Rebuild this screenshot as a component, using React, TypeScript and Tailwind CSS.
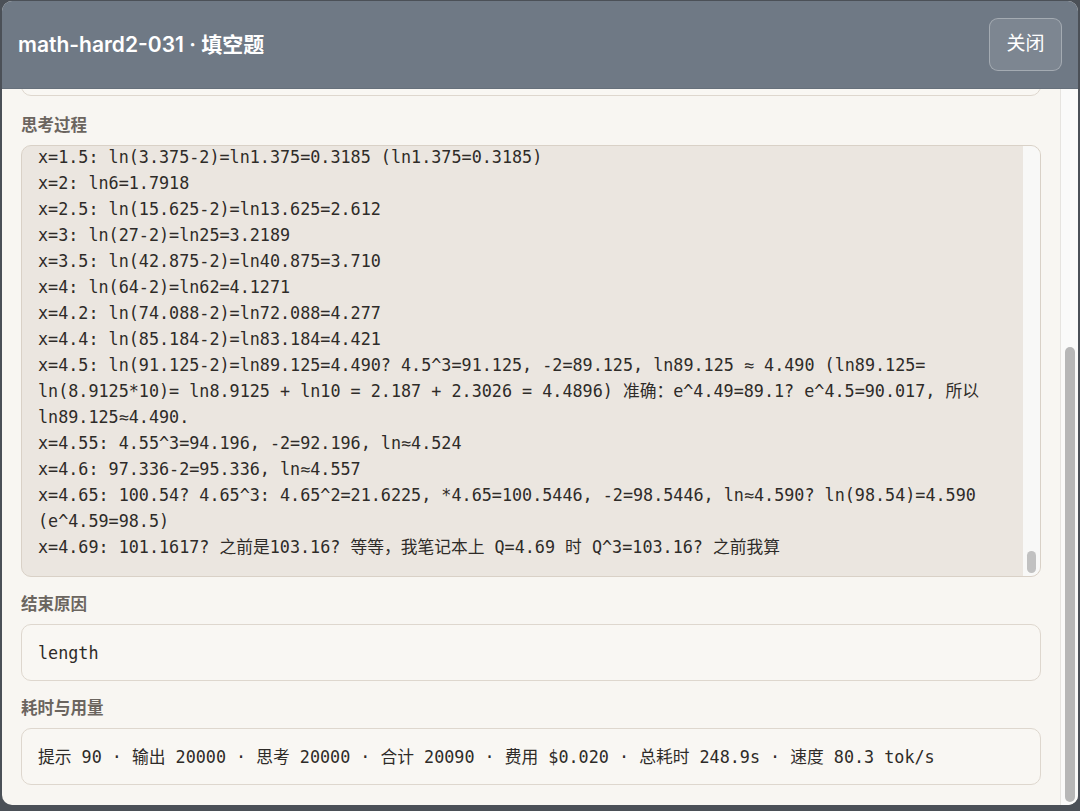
const thinkingLines = [
  "x=1.5: ln(3.375-2)=ln1.375=0.3185 (ln1.375=0.3185)",
  "x=2: ln6=1.7918",
  "x=2.5: ln(15.625-2)=ln13.625=2.612",
  "x=3: ln(27-2)=ln25=3.2189",
  "x=3.5: ln(42.875-2)=ln40.875=3.710",
  "x=4: ln(64-2)=ln62=4.1271",
  "x=4.2: ln(74.088-2)=ln72.088=4.277",
  "x=4.4: ln(85.184-2)=ln83.184=4.421",
  "x=4.5: ln(91.125-2)=ln89.125=4.490? 4.5^3=91.125, -2=89.125, ln89.125 ≈ 4.490 (ln89.125=",
  "ln(8.9125*10)= ln8.9125 + ln10 = 2.187 + 2.3026 = 4.4896) 准确：e^4.49=89.1? e^4.5=90.017, 所以",
  "ln89.125≈4.490.",
  "x=4.55: 4.55^3=94.196, -2=92.196, ln≈4.524",
  "x=4.6: 97.336-2=95.336, ln≈4.557",
  "x=4.65: 100.54? 4.65^3: 4.65^2=21.6225, *4.65=100.5446, -2=98.5446, ln≈4.590? ln(98.54)=4.590",
  "(e^4.59=98.5)",
  "x=4.69: 101.1617? 之前是103.16? 等等，我笔记本上 Q=4.69 时 Q^3=103.16? 之前我算",
];

const mono = {
  fontFamily: '"DejaVu Sans Mono", "Noto Sans CJK SC", monospace',
};

function Label({ children, first }: { children: string; first?: boolean }) {
  return (
    <div
      className={`${first ? "mt-[19px]" : "mt-[17px]"} mb-[10px] h-5 text-[16.5px] font-bold leading-5 text-[#6b655f]`}
    >
      {children}
    </div>
  );
}

function PlainBox({ children }: { children: string }) {
  return (
    <div
      className="h-[57px] rounded-[10px] border border-[#ded7ce] bg-[#f9f7f3] px-4 py-4 text-[16.75px] leading-6 text-[#2e2b28] whitespace-pre"
      style={mono}
    >
      {children}
    </div>
  );
}

export default function App() {
  return (
    <div
      className="h-[811px] w-[1080px] overflow-hidden bg-[#4b5057] pl-[2px] pt-[1px]"
      style={{ fontFamily: 'Inter, "Noto Sans CJK SC", sans-serif' }}
    >
      <div className="flex h-[804px] w-[1076px] flex-col overflow-hidden rounded-[10px] bg-[#f8f6f2]">
        {/* header */}
        <div className="flex shrink-0 items-center justify-between border-b border-[#66707b] bg-[#6f7985] py-[17px] pl-4 pr-[16px]">
          <div className="text-[21px] font-semibold text-white">
            math-hard2-031 · 填空题
          </div>
          <button className="h-[53px] w-[73px] rounded-[9px] border border-white/30 bg-white/10 text-[19px] text-white">
            关闭
          </button>
        </div>

        {/* body */}
        <div className="flex min-h-0 flex-1">
          <div className="flex min-w-0 flex-1 flex-col justify-end overflow-hidden pb-5 pl-[19px] pr-[19px]">
            <div className="h-[60px] shrink-0 rounded-[10px] border border-[#ded7ce] bg-[#f9f7f3]" />

            <Label first>思考过程</Label>
            <div className="flex h-[432px] shrink-0 overflow-hidden rounded-[10px] border border-[#d9d1c7] bg-[#ebe6e0]">
              <div
                className="flex min-w-0 flex-1 flex-col justify-end overflow-hidden pb-4 pl-4 text-[16.75px] leading-[26px] text-[#2e2b28]"
                style={mono}
              >
                {thinkingLines.map((line, i) => (
                  <div key={i} className="shrink-0 whitespace-pre">
                    {line}
                  </div>
                ))}
              </div>
              <div className="flex w-[17px] shrink-0 flex-col justify-end bg-[#f8f8f7] pb-[3px] pl-[4px]">
                <div className="h-[22px] w-[9px] rounded-full bg-[#c1c1c1]" />
              </div>
            </div>

            <Label>结束原因</Label>
            <PlainBox>length</PlainBox>

            <Label>耗时与用量</Label>
            <PlainBox>
              提示 90 · 输出 20000 · 思考 20000 · 合计 20090 · 费用 $0.020 · 总耗时 248.9s · 速度 80.3 tok/s
            </PlainBox>
          </div>

          {/* outer scrollbar */}
          <div className="flex w-[18px] shrink-0 flex-col justify-end border-l border-[#e6e4e0] bg-[#fafaf9] pb-[3px] pl-[4px]">
            <div className="h-[455px] w-[10px] rounded-full bg-[#b7b7b7]" />
          </div>
        </div>
      </div>
    </div>
  );
}
